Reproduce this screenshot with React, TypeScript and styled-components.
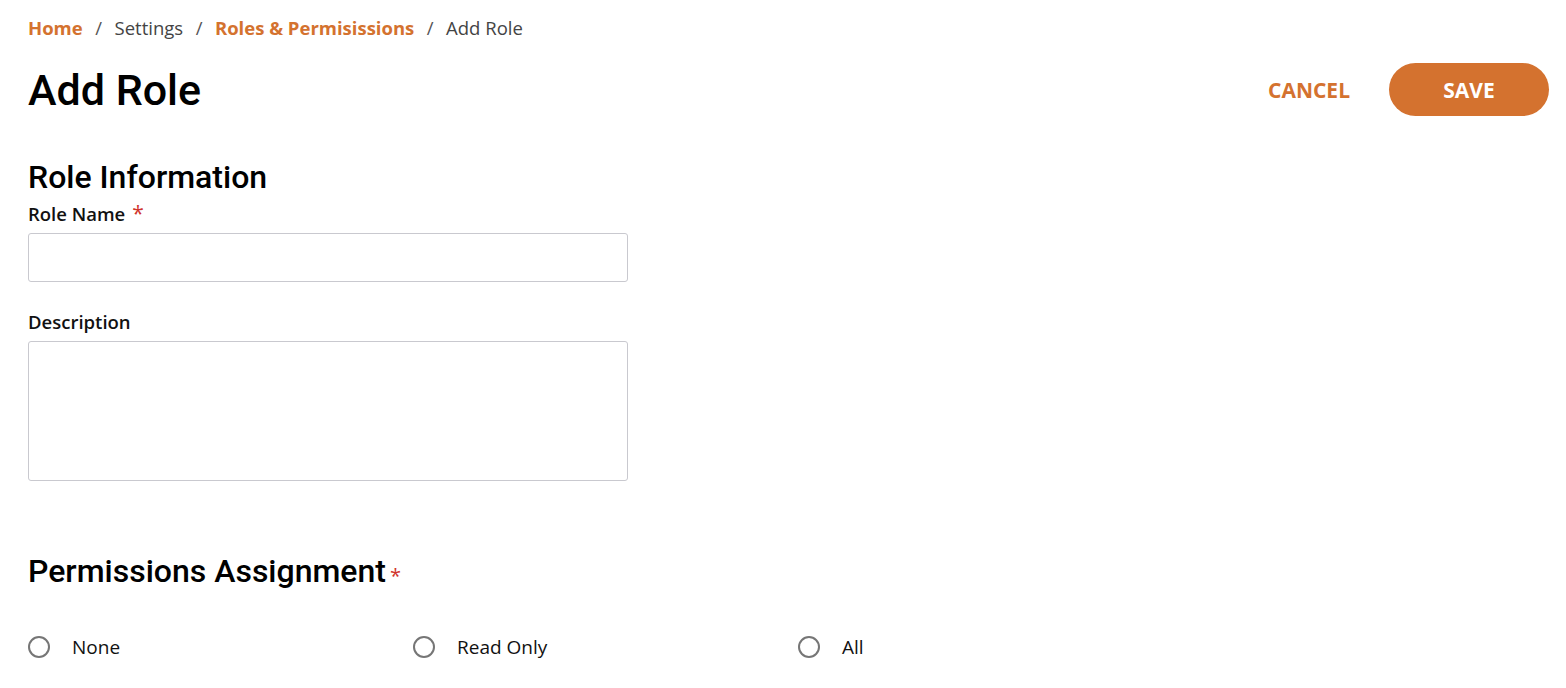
import React, { useState } from 'react'
import styled, { createGlobalStyle } from 'styled-components';

const GlobalStyle = createGlobalStyle`
  html, body {
    margin: 0;
    padding: 0;
    background: #ffffff;
  }
  body {
    font-family: "Open Sans", "Liberation Sans", sans-serif;
    color: #111111;
  }
`;

const ORANGE = '#d4722f';

const Page = styled.div`
  padding: 16px 17px 40px 28px;
`;

const Breadcrumbs = styled.nav`
  display: flex;
  align-items: center;
  font-size: 18.5px;
  line-height: 24px;
`;

const Crumb = styled.a<{ $active?: boolean }>`
  color: ${p => (p.$active ? ORANGE : '#444444')};
  font-weight: ${p => (p.$active ? 700 : 400)};
  text-decoration: none;
  cursor: ${p => (p.$active ? 'pointer' : 'default')};
`;

const Separator = styled.span`
  color: #555555;
  margin: 0 12.5px;
`;

const HeaderRow = styled.div`
  display: flex;
  align-items: center;
  justify-content: space-between;
  margin-top: 23px;
`;

const Title = styled.h1`
  margin: 0;
  font-family: Roboto, "Liberation Sans", sans-serif;
  font-weight: 500;
  font-size: 43px;
  line-height: 52px;
  color: #000000;
`;

const Actions = styled.div`
  display: flex;
  align-items: center;
  gap: 39px;
`;

const TextButton = styled.button`
  background: none;
  border: none;
  padding: 0;
  color: ${ORANGE};
  font-family: "Open Sans", "Liberation Sans", sans-serif;
  font-weight: 700;
  font-size: 21px;
  cursor: pointer;
`;

const PrimaryButton = styled.button`
  width: 160px;
  height: 53px;
  border: none;
  border-radius: 27px;
  background: ${ORANGE};
  color: #ffffff;
  font-family: "Open Sans", "Liberation Sans", sans-serif;
  font-weight: 700;
  font-size: 21px;
  cursor: pointer;
`;

const SectionTitle = styled.h2<{ $gap: number }>`
  margin: ${p => p.$gap}px 0 0;
  font-family: Roboto, "Liberation Sans", sans-serif;
  font-weight: 500;
  font-size: 32px;
  line-height: 40px;
  color: #000000;
  display: flex;
  align-items: flex-end;
`;

const SmallStar = styled.span`
  color: #d0342c;
  font-family: "Open Sans", "Liberation Sans", sans-serif;
  font-size: 20px;
  line-height: 30px;
  margin-left: 4px;
`;

const Field = styled.div<{ $gap: number }>`
  display: flex;
  flex-direction: column;
  width: 600px;
  margin-top: ${p => p.$gap}px;
`;

const Label = styled.label`
  font-size: 18.5px;
  font-weight: 600;
  line-height: 24px;
  color: #111111;
  margin-bottom: 7px;
`;

const Star = styled.span`
  color: #d0342c;
  margin-left: 7px;
  font-size: 21px;
  font-weight: 400;
  line-height: 0;
`;

const TextInput = styled.input`
  box-sizing: border-box;
  height: 49px;
  border: 1px solid #c9c9cf;
  border-radius: 3px;
  padding: 0 12px;
  font-family: inherit;
  font-size: 16px;
  outline: none;
`;

const TextArea = styled.textarea`
  box-sizing: border-box;
  height: 140px;
  border: 1px solid #c9c9cf;
  border-radius: 3px;
  padding: 10px 12px;
  font-family: inherit;
  font-size: 16px;
  resize: none;
  outline: none;
`;

const RadioRow = styled.div`
  display: grid;
  grid-template-columns: repeat(3, 385px);
  margin-top: 44px;
`;

const RadioOption = styled.label`
  display: flex;
  align-items: center;
  gap: 22px;
  font-size: 19px;
  line-height: 24px;
  color: #111111;
  cursor: pointer;
`;

const RadioCircle = styled.span<{ $checked: boolean }>`
  box-sizing: border-box;
  width: 22px;
  height: 22px;
  border-radius: 50%;
  border: 2px solid ${p => (p.$checked ? ORANGE : '#767676')};
  display: flex;
  align-items: center;
  justify-content: center;

  &::after {
    content: '';
    width: 10px;
    height: 10px;
    border-radius: 50%;
    background: ${p => (p.$checked ? ORANGE : 'transparent')};
  }
`;

const HiddenRadio = styled.input`
  display: none;
`;

export default function App() {
  const [permission, setPermission] = useState<string | null>(null);
  const options = ['None', 'Read Only', 'All'];

  return (
    <>
      <GlobalStyle />
      <Page>
        <Breadcrumbs>
          <Crumb $active>Home</Crumb>
          <Separator>/</Separator>
          <Crumb>Settings</Crumb>
          <Separator>/</Separator>
          <Crumb $active>Roles &amp; Permisissions</Crumb>
          <Separator>/</Separator>
          <Crumb>Add Role</Crumb>
        </Breadcrumbs>

        <HeaderRow>
          <Title>Add Role</Title>
          <Actions>
            <TextButton>CANCEL</TextButton>
            <PrimaryButton>SAVE</PrimaryButton>
          </Actions>
        </HeaderRow>

        <SectionTitle $gap={41}>Role Information</SectionTitle>

        <Field $gap={5}>
          <Label>
            Role Name<Star>*</Star>
          </Label>
          <TextInput type="text" />
        </Field>

        <Field $gap={28}>
          <Label>Description</Label>
          <TextArea />
        </Field>

        <SectionTitle $gap={70}>
          Permissions Assignment<SmallStar>*</SmallStar>
        </SectionTitle>

        <RadioRow>
          {options.map(option => (
            <RadioOption key={option} onClick={() => setPermission(option)}>
              <HiddenRadio type="radio" name="permission" checked={permission === option} readOnly />
              <RadioCircle $checked={permission === option} />
              {option}
            </RadioOption>
          ))}
        </RadioRow>
      </Page>
    </>
  )
}
